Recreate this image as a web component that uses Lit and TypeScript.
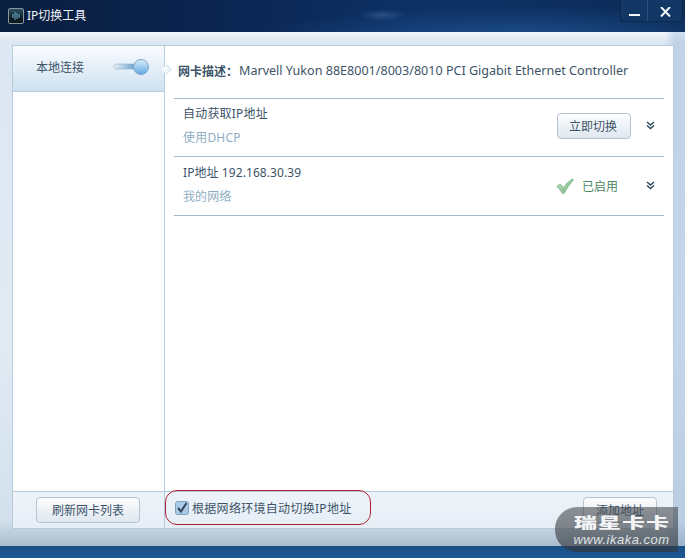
import { LitElement, html, css } from "lit";
import { customElement } from "lit/decorators.js";

const chevrons = html`<svg class="chev" width="9" height="9" viewBox="0 0 9 9"><path d="M1 1l3.5 3L8 1M1 4.500l3.5 3 3.500-3" fill="none" stroke="#2c4a5e" stroke-width="1.500"/></svg>`;

@customElement("app-root")
export class AppRoot extends LitElement {
  static styles = css`
    :host { display: block; width: 685px; height: 558px; position: relative; overflow: hidden; font: 12px "Noto Sans", "Noto Sans CJK SC", sans-serif; color: #3d5468; }
    .win { display: flex; flex-direction: column; height: 558px; }
    .title { height: 32px; flex: none; display: flex; align-items: center; background: radial-gradient(ellipse 24px 6px at 382px 15px, rgba(90,130,180,.35), transparent), radial-gradient(ellipse 260px 30px at 520px 36px, rgba(40,100,170,.55), transparent), linear-gradient(90deg, #0a1e3e 0%, #0b2550 30%, #0d3064 60%, #0d2f60 80%, #0b2a55 100%); color: #f0f5fa; padding-left: 8px; gap: 3px; position: relative; }
    .title span { margin-top: -2px; }
    .logo { width: 16px; height: 16px; box-sizing: border-box; border: 1px solid #8a97a3; border-radius: 2px; background: linear-gradient(#2a5264, #0c1a22 70%); display: flex; align-items: center; justify-content: center; }
    .caption { display: flex; position: absolute; top: 0; right: 2px; height: 21px; border: 1px solid #0b2a4e; border-top: 0; border-radius: 0 0 3px 3px; background: #123764; }
    .cbtn { display: flex; align-items: center; justify-content: center; height: 21px; box-sizing: border-box; padding-top: 3px; }
    .cbtn.min { width: 27px; border-right: 1px solid #2a5080; }
    .cbtn.close { width: 34px; }
    .body { flex: 1; display: flex; padding: 13px 11px 17px 12px; background: linear-gradient(90deg, transparent 97%, rgba(110,150,200,.25) 98.500%), linear-gradient(#f2f8fc 0, #dbe7f2 10px, #e0ebf4 60%, #d3e0ec 95%, #a9bccd 100%); }
    .panel { flex: 1; display: flex; flex-direction: column; border: 1px solid #b6cbdc; background: #fff; box-sizing: border-box; }
    .main { flex: 1; display: flex; min-height: 0; }
    .side { width: 151px; flex: none; border-right: 1px solid #b6cbdc; }
    .tab { height: 46px; display: flex; align-items: center; padding: 0 0 3px 23px; gap: 29px; box-sizing: border-box; background: linear-gradient(#f9fcff, #cfe1f1); border-bottom: 1px solid #b6cbdc; position: relative; }
    .arrow { position: absolute; right: -7px; top: 19px; width: 8px; height: 8px; background: #f2f7fb; border: 1px solid #c6d6e3; border-left: 0; border-bottom: 0; transform: rotate(45deg) scale(.8); }
    .content { flex: 1; padding: 0 9px 0 9px; min-width: 0; }
    .desc { height: 53px; display: flex; align-items: center; padding-left: 4px; box-sizing: border-box; padding-bottom: 3px; white-space: nowrap; border-bottom: 1px solid #a4b9c9; }
    .desc b { font-weight: 700; }
    .desc span { font-size: 12.57px; margin-left: 1px; }
    .row { height: 58px; display: flex; align-items: stretch; box-sizing: border-box; border-bottom: 1px solid #a4b9c9; padding-left: 9px; }
    .row.r2 { height: 59px; }
    .txt { flex: 1; display: flex; flex-direction: column; gap: 6px; padding-top: 6px; line-height: 18px; letter-spacing: .2px; }
    .r2 .txt { padding-top: 7px; letter-spacing: .08px; }
    .sub { color: #8eadc4; }
    .act { display: flex; align-items: center; padding-bottom: 4px; }
    .r2 .act { padding-bottom: 1px; }
    .btn { display: flex; align-items: center; justify-content: center; box-sizing: border-box; border: 1px solid #b7c3ce; border-radius: 4px; background: linear-gradient(#fcfdfe, #dfe7f0); color: #3d5468; }
    .switch { width: 74px; height: 26px; padding-right: 2px; }
    .chev { margin: 0 9px 0 15px; }
    .on { display: flex; align-items: center; color: #4c8a63; gap: 8px; width: 75px; }
    .foot { height: 37px; flex: none; display: flex; border-top: 1px solid #b6cbdc; background: linear-gradient(#edf3f9, #e6eef6); box-sizing: border-box; }
    .fl { width: 152px; flex: none; border-right: 1px solid #b6cbdc; box-sizing: border-box; display: flex; align-items: center; padding-left: 23px; }
    .refresh { width: 104px; height: 26px; }
    .fr { flex: 1; display: flex; align-items: center; justify-content: space-between; padding-right: 16px; }
    .ring { width: 206px; height: 35px; margin: 0 0 5px 0; box-sizing: border-box; border: 1px solid #b01c30; border-radius: 12px; display: flex; align-items: center; padding-left: 9px; gap: 3px; letter-spacing: .3px; }
    .add { width: 74px; height: 26px; }
    .bar { height: 12px; flex: none; background: linear-gradient(#1a4f84, #1c5a96); }
    .mark { position: absolute; left: 555px; top: 507px; width: 123px; height: 45px; border-radius: 22px 0 0 22px; background: linear-gradient(rgba(70,74,80,.58), rgba(50,54,60,.66)); color: #f2f4f6; display: flex; flex-direction: column; align-items: center; box-sizing: border-box; padding-left: 10px; }
    .mark .cn { font-size: 23px; line-height: 20px; font-weight: 900; letter-spacing: 1px; margin: 5px -1px 0 0; white-space: nowrap; transform: scaleY(.62); }
    .mark .url { font: italic 13px/15px "Liberation Sans", sans-serif; letter-spacing: .5px; color: #dfe3e6; }
  `;

  render() {
    return html`<div class="win">
      <div class="title">
        <div class="logo"><svg width="12" height="12" viewBox="0 0 12 12"><path d="M3 4v4M5 2v8M7 3v6M9 4v4" stroke="#6fb0cc" stroke-width="1"/></svg></div>
        <span>IP切换工具</span>
        <div class="caption">
          <div class="cbtn min"><svg width="11" height="10" viewBox="0 0 11 10"><rect y="7" width="11" height="2" fill="#f4f7fa"/></svg></div>
          <div class="cbtn close"><svg width="11" height="10" viewBox="0 0 11 10"><path d="M1 0l9 9.500M10 0L1 9.500" stroke="#f4f7fa" stroke-width="2"/></svg></div>
        </div>
      </div>
      <div class="body">
        <div class="panel">
          <div class="main">
            <div class="side">
              <div class="tab">
                <span>本地连接</span>
                <svg width="38" height="20" viewBox="0 0 38 20">
                  <defs>
                    <linearGradient id="k" x1="0" y1="0" x2="0" y2="1"><stop offset="0" stop-color="#dceefb"/><stop offset="1" stop-color="#5fa8e6"/></linearGradient>
                    <linearGradient id="t" x1="0" y1="0" x2="1" y2="0"><stop offset="0" stop-color="#e8f1f8"/><stop offset="1" stop-color="#5e94c6"/></linearGradient>
                  </defs>
                  <rect x="1" y="7" width="24" height="5" rx="2.500" fill="url(#t)" stroke="#8fb0c9" stroke-width=".6"/>
                  <circle cx="28" cy="10" r="7.500" fill="url(#k)" stroke="#7fa6c4"/>
                </svg>
                <div class="arrow"></div>
              </div>
            </div>
            <div class="content">
              <div class="desc"><b>网卡描述：</b><span>Marvell Yukon 88E8001/8003/8010 PCI Gigabit Ethernet Controller</span></div>
              <div class="row">
                <div class="txt"><span>自动获取IP地址</span><span class="sub">使用DHCP</span></div>
                <div class="act"><div class="btn switch">立即切换</div>${chevrons}</div>
              </div>
              <div class="row r2">
                <div class="txt"><span>IP地址 192.168.30.39</span><span class="sub">我的网络</span></div>
                <div class="act">
                  <div class="on">
                    <svg width="18" height="16" viewBox="0 0 18 16">
                      <defs><linearGradient id="g" x1="0" y1="0" x2="1" y2="1"><stop offset="0" stop-color="#c4e6c6"/><stop offset="1" stop-color="#6fb07c"/></linearGradient></defs>
                      <path d="M.7 8.500Q2.500 6 5 6.500L7.500 9.500Q11 4 16.500.7L17.500 2Q12 8 8 15.500L6.500 15.500Q4 11.500.7 8.500z" fill="url(#g)" stroke="#7fb18b" stroke-width=".7"/>
                    </svg>已启用</div>
                  ${chevrons}
                </div>
              </div>
            </div>
          </div>
          <div class="foot">
            <div class="fl"><div class="btn refresh">刷新网卡列表</div></div>
            <div class="fr">
              <div class="ring">
                <svg width="14" height="14" viewBox="0 0 14 14"><rect x=".5" y=".5" width="13" height="13" rx="2" fill="#a9cbe6" stroke="#7fa3bf"/><path d="M3 7l3 3.500L11.500 2" fill="none" stroke="#33465a" stroke-width="2"/></svg>
                <span>根据网络环境自动切换IP地址</span>
              </div>
              <div class="btn add">添加地址</div>
            </div>
          </div>
        </div>
      </div>
      <div class="bar"></div>
    </div>
    <div class="mark"><span class="cn">瑞星卡卡</span><span class="url">www.ikaka.com</span></div>`;
  }
}
